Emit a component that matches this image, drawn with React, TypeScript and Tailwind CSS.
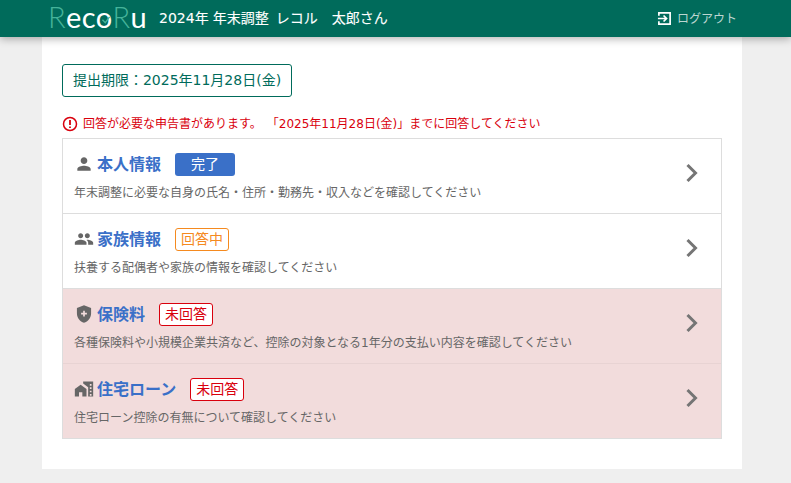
import type { ReactNode } from "react";

const jp = "font-['DejaVu_Sans','Noto_Sans_CJK_JP',sans-serif]";

type Status = "done" | "progress" | "none";

interface RowProps {
  icon: ReactNode;
  title: string;
  status: Status;
  description: string;
  highlight?: boolean;
  last?: boolean;
}

function MaterialIcon({ d }: { d: string }) {
  return (
    <svg viewBox="0 0 24 24" className="w-[20px] h-[20px] shrink-0 fill-[#666666]">
      <path d={d} />
    </svg>
  );
}

const personPath = "M12 12c2.2 0 4-1.8 4-4s-1.8-4-4-4-4 1.8-4 4 1.8 4 4 4zm0 2c-2.7 0-8 1.3-8 4v2h16v-2c0-2.7-5.3-4-8-4z";
const peoplePath =
  "M16 11c1.7 0 3-1.3 3-3s-1.3-3-3-3-3 1.3-3 3 1.3 3 3 3zm-8 0c1.7 0 3-1.3 3-3S9.7 5 8 5 5 6.3 5 8s1.3 3 3 3zm0 2c-2.3 0-7 1.2-7 3.5V19h14v-2.5C15 14.2 10.3 13 8 13zm8 0c-.3 0-.6 0-1 .1 1.2.8 2 2 2 3.4V19h6v-2.5c0-2.3-4.7-3.5-7-3.5z";
const shieldPath =
  "M12 1.5 3.5 4.7v6.4c0 5.3 3.6 10.2 8.5 11.4 4.900-1.200 8.500-6.100 8.500-11.400V4.700L12 1.500zm3.500 11H13V15h-2v-2.500H8.500v-2H11V8h2v2.500h2.500v2z";
const homePath =
  "M1 21v-9l7-5 7 5v9h-5v-5H6v5H1zM11 3v2.500l6 4.500v11h6V3H11zm8 3h2v2h-2V6zm0 4h2v2h-2v-2zm0 4h2v2h-2v-2zm0 4h2v2h-2v-2z";

function Badge({ status }: { status: Status }) {
  if (status === "done") {
    return (
      <span className="flex items-center justify-center w-[60px] h-[23px] rounded-[3px] bg-[#3a70c8] text-white text-[14px]">
        完了
      </span>
    );
  }
  if (status === "progress") {
    return (
      <span className="flex items-center justify-center w-[54px] h-[23px] rounded-[3px] bg-white border border-[#f58a1f] text-[#f58a1f] text-[14px]">
        回答中
      </span>
    );
  }
  return (
    <span className="flex items-center justify-center w-[54px] h-[23px] rounded-[3px] bg-white border border-[#d9000d] text-[#d9000d] text-[14px]">
      未回答
    </span>
  );
}

function Row({ icon, title, status, description, highlight, last }: RowProps) {
  return (
    <div
      className={`flex items-center justify-between pl-[11px] pr-[22px] ${
        last ? "h-[74px]" : "h-[75px] border-b"
      } ${highlight ? "bg-[#f2dcdc] border-[#e8d3d3]" : "bg-white border-[#dddddd]"}`}
    >
      <div className="flex flex-col pt-[2px]">
        <div className="flex items-center gap-[14px]">
          <div className="flex items-center gap-[3px]">
            {icon}
            <span className="text-[16px] leading-[23px] font-bold text-[#3a70c8]">{title}</span>
          </div>
          <Badge status={status} />
        </div>
        <p className="mt-[8px] text-[12px] leading-[18px] text-[#666666]">{description}</p>
      </div>
      <svg viewBox="0 0 14 20" className="w-[14px] h-[20px] mb-[6px] fill-none stroke-[#757575] stroke-[3]">
        <path d="M2.5 2 10.5 10 2.5 18" />
      </svg>
    </div>
  );
}

export default function App() {
  return (
    <div className={`${jp} min-h-[483px] bg-[#efefef] flex flex-col`}>
      <header className="relative z-10 flex items-center justify-between h-[37px] pl-[48px] pr-[54px] bg-[#006b5b] shadow-[0_2px_8px_rgba(0,0,0,0.3)]">
        <div className="flex items-center">
          <div className="relative flex items-baseline w-[97px] h-[37px] font-['Lato',sans-serif] text-[29px] leading-[34px] tracking-[0.4px] text-white">
            <span className="font-light text-[#45b39a]">R</span>
            <span>eco</span>
            <span className="font-light text-[#45b39a]">R</span>
            <span>u</span>
            <svg viewBox="0 0 14 12" className="absolute left-[53px] top-[16px] w-[10px] h-[9px] fill-none stroke-[#45b39a] stroke-[2]">
              <path d="M2 5 6 9 12 1" />
            </svg>
          </div>
          <div className="flex items-center ml-[14px] text-[14px] text-white [-webkit-text-stroke:0.1px_white]">
            <span>2024年</span>
            <span className="ml-[4px]">年末調整</span>
            <span className="ml-[7px]">レコル</span>
            <span className="ml-[14px]">太郎さん</span>
          </div>
        </div>
        <div className="flex items-center gap-[5px] text-[12px] text-[#bcd6d1]">
          <svg viewBox="0 0 16 16" className="w-[15px] h-[15px] fill-none stroke-white stroke-[1.8]">
            <path d="M2 5V2h12v12H2v-3M1 8h9M7 4.8 10.2 8 7 11.2" />
          </svg>
          <span className="mt-[1px]">ログアウト</span>
        </div>
      </header>

      <main className="ml-[42px] w-[700px] h-[432px] bg-white px-[20px] pt-[27px]">
        <div className="flex items-center justify-center w-[230px] h-[33px] rounded-[3px] border border-[#006b5b] text-[14px] text-[#006b5b]">
          提出期限：2025年11月28日(金)
        </div>

        <div className="flex items-center gap-[5px] mt-[17px] h-[20px] text-[12px] text-[#d9000d]">
          <svg viewBox="0 0 16 16" className="w-[16px] h-[16px] shrink-0 fill-none stroke-[#d9000d]">
            <circle cx="8" cy="8" r="6.5" strokeWidth="1.5" />
            <path d="M8 4v5M8 10.5V12" strokeWidth="1.8" />
          </svg>
          <span>回答が必要な申告書があります。</span>
          <span className="whitespace-nowrap">「2025年11月28日(金)」までに回答してください</span>
        </div>

        <div className="mt-[4px] border border-[#dddddd]">
          <Row
            icon={<MaterialIcon d={personPath} />}
            title="本人情報"
            status="done"
            description="年末調整に必要な自身の氏名・住所・勤務先・収入などを確認してください"
          />
          <Row
            icon={<MaterialIcon d={peoplePath} />}
            title="家族情報"
            status="progress"
            description="扶養する配偶者や家族の情報を確認してください"
          />
          <Row
            icon={<MaterialIcon d={shieldPath} />}
            title="保険料"
            status="none"
            highlight
            description="各種保険料や小規模企業共済など、控除の対象となる1年分の支払い内容を確認してください"
          />
          <Row
            icon={<MaterialIcon d={homePath} />}
            title="住宅ローン"
            status="none"
            highlight
            last
            description="住宅ローン控除の有無について確認してください"
          />
        </div>
      </main>
    </div>
  );
}
